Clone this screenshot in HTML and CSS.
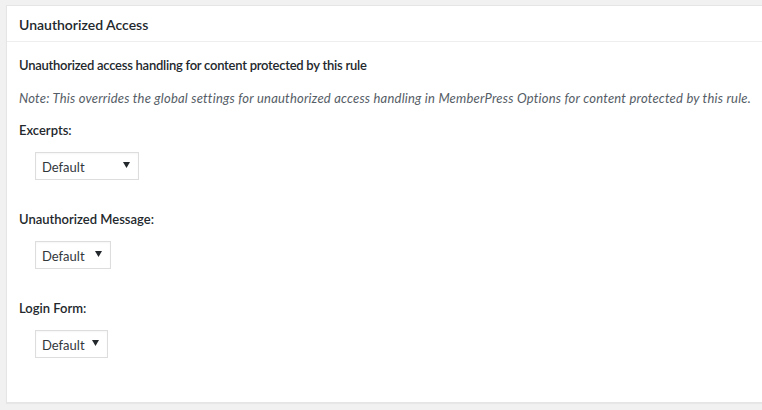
FILE: index.html
```html
<!DOCTYPE html>
<html>
<head>
<meta charset="utf-8">
<link rel="stylesheet" href="styles.css">
</head>
<body>
<div class="panel">
  <div class="panel-head">Unauthorized Access</div>
  <div class="panel-body">
    <div class="intro">Unauthorized access handling for content protected by this rule</div>
    <div class="note">Note: This overrides the global settings for unauthorized access handling in MemberPress Options for content protected by this rule.</div>
    <div class="fields">
      <div class="field">
        <div class="label">Excerpts:</div>
        <div class="select select-excerpts"><span>Default</span><svg class="caret" width="7" height="6" viewBox="0 0 7 6"><path d="M0 0H7L3.5 6Z" fill="#23282d"/></svg></div>
      </div>
      <div class="field">
        <div class="label">Unauthorized Message:</div>
        <div class="select select-message"><span>Default</span><svg class="caret" width="7" height="6" viewBox="0 0 7 6"><path d="M0 0H7L3.5 6Z" fill="#23282d"/></svg></div>
      </div>
      <div class="field">
        <div class="label">Login Form:</div>
        <div class="select select-login"><span>Default</span><svg class="caret" width="7" height="6" viewBox="0 0 7 6"><path d="M0 0H7L3.5 6Z" fill="#23282d"/></svg></div>
      </div>
    </div>
  </div>
</div>
</body>
</html>
```
FILE: styles.css
```css
html, body {
  margin: 0;
  padding: 0;
}
body {
  background: #f1f1f1;
  font-family: Lato, "Noto Sans", sans-serif;
  font-size: 13px;
  color: #23282d;
  padding: 5px 0 0 6px;
  overflow: hidden;
  height: 410px;
  box-sizing: border-box;
}
.panel {
  background: #fff;
  border: 1px solid #e5e5e5;
  border-right: none;
  box-shadow: 0 1px 1px rgba(0,0,0,0.04);
  width: 800px;
}
.panel-head {
  height: 35px;
  line-height: 37px;
  padding-left: 12px;
  font-size: 14px;
  font-weight: 600;
  border-bottom: 1px solid #eee;
}
.panel-body {
  padding: 13px 12px 44px 12px;
  display: flex;
  flex-direction: column;
}
.intro {
  line-height: 20px;
  font-weight: 600;
  letter-spacing: -0.25px;
}
.note {
  line-height: 20px;
  margin-top: 13px;
  font-style: italic;
  color: #555d66;
  white-space: nowrap;
  letter-spacing: 0.21px;
}
.fields {
  margin-top: 12px;
  display: flex;
  flex-direction: column;
  gap: 29px;
}
.field {
  display: flex;
  flex-direction: column;
  align-items: flex-start;
  gap: 12px;
}
.label {
  line-height: 20px;
  font-weight: 600;
  color: #23282d;
}
.select {
  margin-left: 16px;
  height: 28px;
  box-sizing: border-box;
  border: 1px solid #ddd;
  background: #fff;
  display: flex;
  align-items: center;
  justify-content: space-between;
  padding: 0 8px 0 6px;
  color: #32373c;
  font-size: 13px;
  box-shadow: inset 0 1px 2px rgba(0,0,0,0.04);
}
.select span { line-height: 26px; padding-top: 1px; }
.caret { margin-top: -3px; }
.select-excerpts { width: 104px; }
.select-message { width: 76px; }
.select-login { width: 73px; }
```
